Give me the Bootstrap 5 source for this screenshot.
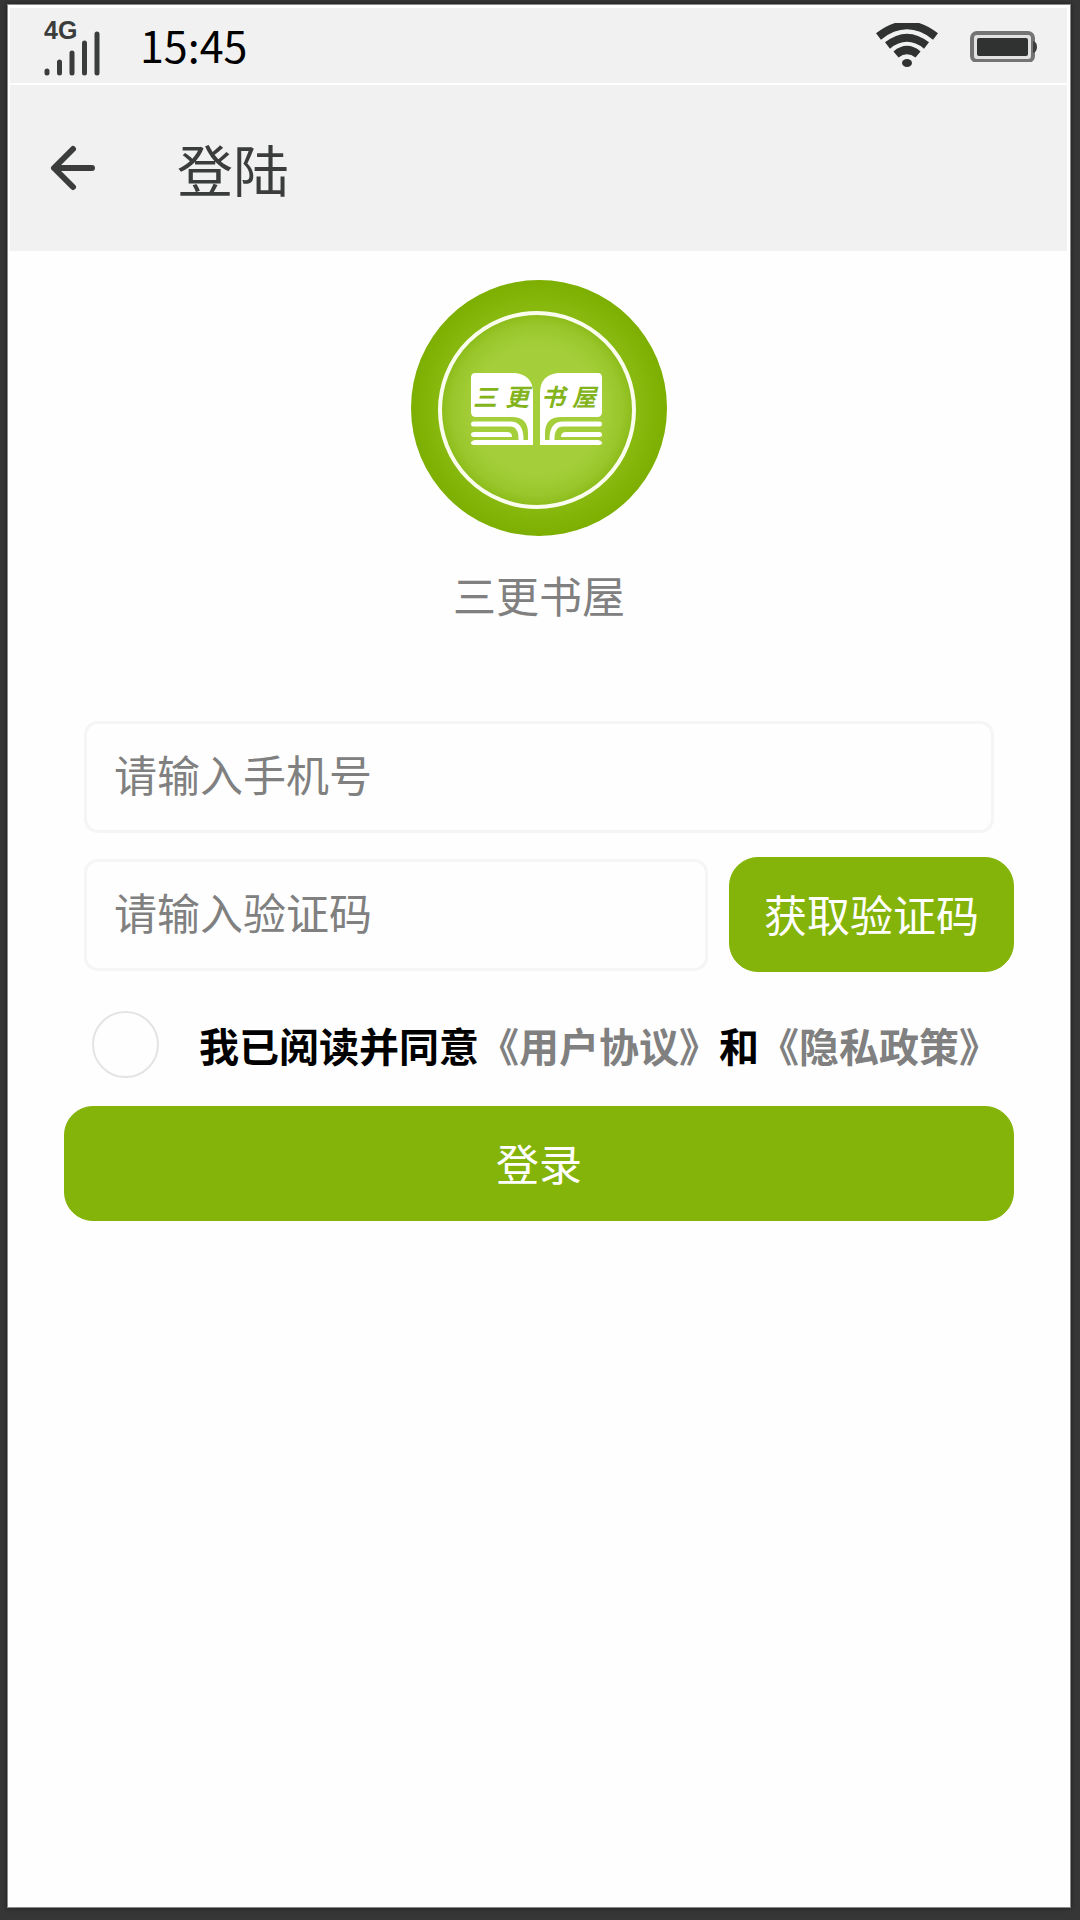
<!DOCTYPE html>
<html lang="zh-CN">
<head>
<meta charset="utf-8">
<meta name="viewport" content="width=device-width, initial-scale=1">
<title>登陆</title>
<link href="https://cdn.jsdelivr.net/npm/bootstrap@5.3.0/dist/css/bootstrap.min.css" rel="stylesheet">
<style>
  :root { --leaf: #84b409; --ink: #3b3d3c; --muted-ink: #808080; --bar: #f1f1f1; }
  body { font-family: "Noto Sans CJK SC", sans-serif; font-size: 43px; line-height: 64px; color: #000; background: #363636; }
  .device { padding: 4px 9px 12px 7px; }
  .screen { background: #fefefe; border: 1px solid #8a8a8a; box-shadow: 0 0 4px #1c1c1c; }
  .top-bars { margin: 3px 3px 0 2px; }
  .status-bar { height: 75px; padding: 0 30px 0 34px; background: var(--bar); }
  .clock { margin-left: 38px; padding-bottom: 4px; font-size: 43px; }
  .battery { margin-left: 32px; }
  .app-bar { height: 166px; margin-top: 2px; padding-left: 39px; background: var(--bar); color: var(--ink); }
  .app-title { margin: 0 0 0 80px; font-size: 56px; line-height: 84px; font-weight: 400; }
  .brand { padding-top: 29px; color: var(--muted-ink); }
  .brand p { margin: 26px 0 95px; }
  .login-form { padding: 0 56px; }
  .field { height: 112px; padding: 0 27px 8px; border: 3px solid #f5f5f5; border-radius: 14px; font-size: 43px; line-height: 64px; background: #fefefe; }
  .field::placeholder { color: var(--muted-ink); opacity: 1; }
  .phone-row { padding: 0 20px; margin-bottom: 24px; }
  .code-row { padding-left: 20px; gap: 21px; }
  .btn-leaf { --bs-btn-color: #fff; --bs-btn-bg: var(--leaf); --bs-btn-border-color: var(--leaf);
    --bs-btn-hover-color: #fff; --bs-btn-hover-bg: #759f08; --bs-btn-hover-border-color: #759f08;
    --bs-btn-active-color: #fff; --bs-btn-active-bg: #688e07; --bs-btn-active-border-color: #688e07;
    --bs-btn-font-size: 43px; --bs-btn-line-height: 64px; --bs-btn-border-radius: 29px; --bs-btn-padding-x: 34px;
    height: 115px; padding-bottom: 10px; }
  .agree { padding: 39px 0 28px 28px; font-size: 40px; font-weight: 700; }
  .agree .form-check-input { width: 67px; height: 67px; border: 2px solid #e4e4e7; border-radius: 50%; background-color: #fefefe; }
  .agree .form-check-input:checked { background-color: var(--leaf); border-color: var(--leaf); }
  .agree label { margin-left: 40px; }
  .agree a { color: var(--muted-ink); }
</style>
</head>
<body>
<div class="device d-flex min-vh-100">
  <div class="screen flex-grow-1">
    <header class="top-bars">
      <div class="status-bar d-flex align-items-center">
        <svg width="58" height="60" viewBox="0 0 58 60" role="img" aria-label="4G">
          <text x="0" y="23" font-family="Liberation Sans, sans-serif" font-size="25" font-weight="700" fill="#3b3d3c">4G</text>
          <g stroke="#3b3d3c" stroke-width="5" stroke-linecap="round">
            <path d="M3 55v2M15.500 46v11M28 37v20M40.500 27v30M53 18v39"/>
          </g>
        </svg>
        <time class="clock">15:45</time>
        <svg class="ms-auto" width="62" height="46" viewBox="0 0 62 46" fill="none" stroke="#303231" role="img" aria-label="Wi-Fi">
          <path d="M2.500 13.500Q31 -9 59.500 13.500" stroke-width="8"/>
          <path d="M11.500 22.500Q31 7 50.500 22.500" stroke-width="8"/>
          <path d="M20 31.500Q31 22.500 42 31.500" stroke-width="8"/>
          <ellipse cx="31" cy="40" rx="5" ry="4" fill="#303231" stroke="none"/>
        </svg>
        <svg class="battery" width="67" height="32" viewBox="0 0 67 32" role="img" aria-label="电量">
          <rect x="2" y="3" width="61" height="28" rx="5" fill="#e2e2e2" stroke="#747474" stroke-width="4"/>
          <rect x="7" y="8" width="51" height="18" rx="2" fill="#303231"/>
          <path d="M63 11q4 1 4 6t-4 6z" fill="#3b3d3c"/>
        </svg>
      </div>
      <div class="app-bar d-flex align-items-center">
        <a href="#" class="d-flex text-reset" aria-label="返回">
          <svg width="48" height="48" viewBox="0 0 48 48" fill="none" stroke="currentColor" stroke-width="6" stroke-linecap="round" stroke-linejoin="round"><path d="M24 5L5 24L24 43M6 24H43"/></svg>
        </a>
        <h1 class="app-title">登陆</h1>
      </div>
    </header>
    <main>
      <div class="brand text-center">
        <svg class="d-block mx-auto" width="256" height="256" viewBox="0 0 256 256" role="img" aria-label="三更书屋">
          <defs>
            <radialGradient id="rim"><stop offset=".78" stop-color="#88b90f"/><stop offset="1" stop-color="#7caf00"/></radialGradient>
            <radialGradient id="disc"><stop offset=".65" stop-color="#a5cf3a"/><stop offset=".88" stop-color="#99c62b"/><stop offset="1" stop-color="#8abb18"/></radialGradient>
            <g id="page">
              <path d="M64 93H104Q122 95 122 113V165H64Q60 165 60 163T64 160H117V153Q117 137 101 137H65Q60 137 60 132V98Q60 93 64 93Z" fill="#fff"/>
              <path d="M62.500 144H99Q110 144 110 159" fill="none" stroke="#fff" stroke-width="5" stroke-linecap="round"/>
              <path d="M63 152H96Q101 152 101 157H63Q60 157 60 154.500T63 152Z" fill="#fff"/>
            </g>
          </defs>
          <circle cx="128" cy="128" r="128" fill="url(#rim)"/>
          <circle cx="126" cy="130" r="97" fill="url(#disc)" stroke="#fafdee" stroke-width="4"/>
          <use href="#page"/>
          <use href="#page" transform="matrix(-1 0 0 1 251 0)"/>
          <g font-family="Noto Sans CJK SC, sans-serif" font-size="24" font-weight="700" font-style="italic" fill="#84b41c">
            <text x="62 94" y="126">三更</text>
            <text x="130 161" y="126">书屋</text>
          </g>
        </svg>
        <p>三更书屋</p>
      </div>
      <form class="login-form">
        <div class="phone-row"><input type="tel" class="form-control field" placeholder="请输入手机号" aria-label="手机号"></div>
        <div class="code-row d-flex align-items-center">
          <input type="text" inputmode="numeric" class="form-control field flex-fill" placeholder="请输入验证码" aria-label="验证码">
          <button type="button" class="btn btn-leaf text-nowrap">获取验证码</button>
        </div>
        <div class="agree d-flex align-items-center">
          <input class="form-check-input flex-shrink-0 m-0" type="checkbox" id="agree">
          <label for="agree">我已阅读并同意<a href="#" class="text-decoration-none">《用户协议》</a>和<a href="#" class="text-decoration-none">《隐私政策》</a></label>
        </div>
        <button type="submit" class="btn btn-leaf w-100">登录</button>
      </form>
    </main>
  </div>
</div>
<script src="https://cdn.jsdelivr.net/npm/bootstrap@5.3.0/dist/js/bootstrap.bundle.min.js"></script>
</body>
</html>
